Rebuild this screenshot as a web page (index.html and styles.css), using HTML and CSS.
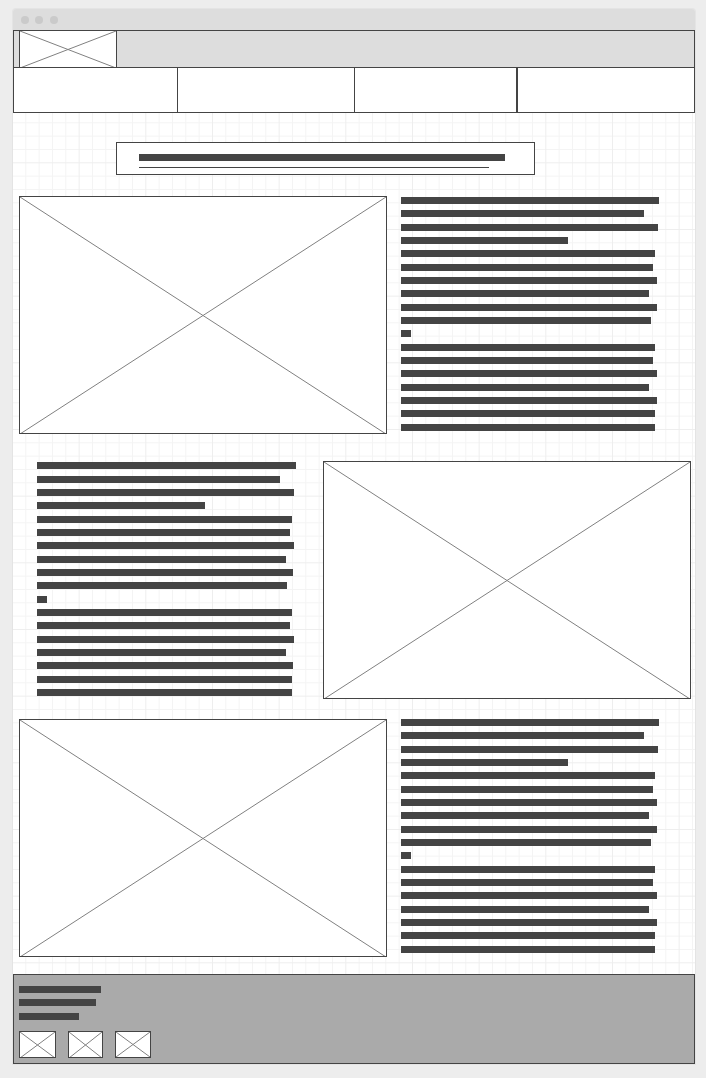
FILE: index.html
```html
<!DOCTYPE html>
<html lang="en">
<head>
<meta charset="utf-8">
<meta name="viewport" content="width=device-width, initial-scale=1">
<title>Wireframe</title>
<link rel="stylesheet" href="styles.css">
</head>
<body>
<div class="window">
  <div class="titlebar"><span class="dot"></span><span class="dot"></span><span class="dot"></span></div>
  <header class="header">
    <svg class="picture logo" viewBox="0 0 96 36" preserveAspectRatio="none" aria-hidden="true"><path d="M0 0L96 37M96 0L0 37"/></svg>
  </header>
  <nav class="nav"><div class="cell"></div><div class="cell"></div><div class="cell"></div><div class="cell"></div></nav>
  <main class="canvas">
    <div class="headline">
      <div class="headline-box">
        <div class="bar"></div>
        <div class="rule"></div>
      </div>
    </div>
    <section class="row">
      <svg class="picture photo" viewBox="0 0 366 236" preserveAspectRatio="none" aria-hidden="true"><path d="M0 0L366 237M366 0L0 237"/></svg>
      <div class="lines">
        <div class="bar" style="width:100%"></div>
        <div class="bar" style="width:94.2%"></div>
        <div class="bar" style="width:99.6%"></div>
        <div class="bar" style="width:64.7%"></div>
        <div class="bar" style="width:98.4%"></div>
        <div class="bar" style="width:97.7%"></div>
        <div class="bar" style="width:99.2%"></div>
        <div class="bar" style="width:96.1%"></div>
        <div class="bar" style="width:99.2%"></div>
        <div class="bar" style="width:96.9%"></div>
        <div class="bar" style="width:3.9%"></div>
        <div class="bar" style="width:98.4%"></div>
        <div class="bar" style="width:97.7%"></div>
        <div class="bar" style="width:99.2%"></div>
        <div class="bar" style="width:96.1%"></div>
        <div class="bar" style="width:99.2%"></div>
        <div class="bar" style="width:98.4%"></div>
        <div class="bar" style="width:98.4%"></div>
      </div>
    </section>
    <section class="row row-flipped">
      <div class="lines">
        <div class="bar" style="width:100%"></div>
        <div class="bar" style="width:93.8%"></div>
        <div class="bar" style="width:99.2%"></div>
        <div class="bar" style="width:64.9%"></div>
        <div class="bar" style="width:98.5%"></div>
        <div class="bar" style="width:97.7%"></div>
        <div class="bar" style="width:99.2%"></div>
        <div class="bar" style="width:96.1%"></div>
        <div class="bar" style="width:98.8%"></div>
        <div class="bar" style="width:96.5%"></div>
        <div class="bar" style="width:3.9%"></div>
        <div class="bar" style="width:98.5%"></div>
        <div class="bar" style="width:97.7%"></div>
        <div class="bar" style="width:99.2%"></div>
        <div class="bar" style="width:96.1%"></div>
        <div class="bar" style="width:98.8%"></div>
        <div class="bar" style="width:98.5%"></div>
        <div class="bar" style="width:98.5%"></div>
      </div>
      <svg class="picture photo" viewBox="0 0 366 236" preserveAspectRatio="none" aria-hidden="true"><path d="M0 0L366 237M366 0L0 237"/></svg>
    </section>
    <section class="row row-last">
      <svg class="picture photo" viewBox="0 0 366 236" preserveAspectRatio="none" aria-hidden="true"><path d="M0 0L366 237M366 0L0 237"/></svg>
      <div class="lines">
        <div class="bar" style="width:100%"></div>
        <div class="bar" style="width:94.2%"></div>
        <div class="bar" style="width:99.6%"></div>
        <div class="bar" style="width:64.7%"></div>
        <div class="bar" style="width:98.4%"></div>
        <div class="bar" style="width:97.7%"></div>
        <div class="bar" style="width:99.2%"></div>
        <div class="bar" style="width:96.1%"></div>
        <div class="bar" style="width:99.2%"></div>
        <div class="bar" style="width:96.9%"></div>
        <div class="bar" style="width:3.9%"></div>
        <div class="bar" style="width:98.4%"></div>
        <div class="bar" style="width:97.7%"></div>
        <div class="bar" style="width:99.2%"></div>
        <div class="bar" style="width:96.1%"></div>
        <div class="bar" style="width:99.2%"></div>
        <div class="bar" style="width:98.4%"></div>
        <div class="bar" style="width:98.4%"></div>
      </div>
    </section>
  </main>
  <footer class="footer">
    <div class="contact">
      <div class="bar" style="width:82px"></div>
      <div class="bar" style="width:77px"></div>
      <div class="bar" style="width:60px"></div>
    </div>
    <div class="social">
      <svg class="picture icon" viewBox="0 0 35 25" preserveAspectRatio="none" aria-hidden="true"><path d="M0 0L35 26M35 0L0 26"/></svg>
      <svg class="picture icon" viewBox="0 0 35 25" preserveAspectRatio="none" aria-hidden="true"><path d="M0 0L35 26M35 0L0 26"/></svg>
      <svg class="picture icon" viewBox="0 0 35 25" preserveAspectRatio="none" aria-hidden="true"><path d="M0 0L35 25M35 0L0 25"/></svg>
    </div>
  </footer>
</div>
</body>
</html>
```
FILE: styles.css
```css
* { box-sizing: border-box; }

body {
  margin: 0;
  padding: 9px 11px 14px 13px;
  background: #ededed;
  font-family: "Liberation Sans", sans-serif;
}

.window {
  border-radius: 3px 3px 0 0;
  box-shadow: 0 0 0 1px #e4e4e4;
}

.titlebar {
  display: flex;
  align-items: center;
  gap: 6px;
  height: 21px;
  padding-left: 8px;
  border-radius: 3px 3px 0 0;
  background: #ddd;
}

.dot {
  width: 8px;
  height: 8px;
  border-radius: 50%;
  background: #cacaca;
}

.dot:last-child { margin-left: 1px; }

.header {
  display: flex;
  padding-left: 5px;
  border: solid #444;
  border-width: 0 1px;
  background: #ddd;
  box-shadow: inset 0 1px #444;
}

.picture {
  display: block;
  border: 1px solid #444;
  background: #fff;
}

.picture path {
  fill: none;
  stroke: #808080;
  stroke-width: 1px;
  vector-effect: non-scaling-stroke;
}

.logo {
  width: 98px;
  height: 37px;
  border-bottom: 0;
}

.nav {
  display: grid;
  grid-template-columns: 164fr 177fr 163fr 176fr;
  height: 46px;
  border: 1px solid #444;
  background: #fff;
}

.cell { border-right: 1px solid #444; }
.cell:nth-child(3) { border-right-width: 2px; }
.cell:last-child { border-right: 0; }

.canvas {
  padding: 29px 0 17px;
  background: #fff url("data:image/svg+xml,%3Csvg xmlns='http://www.w3.org/2000/svg' width='200' height='200' viewBox='0 0 600 600'%3E%3Cg fill='none' stroke-width='3'%3E%3Cpath stroke='%23f4f4f4' d='M41.5 0v600M81.5 0v600M121.5 0v600M161.5 0v600M241.5 0v600M281.5 0v600M321.5 0v600M361.5 0v600M441.5 0v600M481.5 0v600M521.5 0v600M561.5 0v600M0 41.5h600M0 81.5h600M0 121.5h600M0 161.5h600M0 241.5h600M0 281.5h600M0 321.5h600M0 361.5h600M0 441.5h600M0 481.5h600M0 521.5h600M0 561.5h600'/%3E%3Cpath stroke='%23eeeeee' d='M1.5 0v600M201.5 0v600M401.5 0v600M0 1.5h600M0 201.5h600M0 401.5h600'/%3E%3C/g%3E%3C/svg%3E") -1px -84px;
}

.headline {
  display: grid;
  grid-template-columns: 419fr;
  padding: 0 160px 0 103px;
}

.headline-box {
  padding: 11px 29px 6px 22px;
  border: 1px solid #444;
  background: #fff;
}

.bar {
  height: 7px;
  background: #444;
}

.rule {
  height: 1px;
  margin: 6px 16px 0 0;
  background: #444;
}

.row {
  display: grid;
  grid-template-columns: 368fr 258fr;
  gap: 14px;
  margin-top: 21px;
  padding: 0 36px 0 6px;
}

.row-flipped {
  grid-template-columns: 259fr 368fr;
  gap: 27px;
  margin-top: 27px;
  padding: 0 4px 0 24px;
}

.row-last { margin-top: 20px; }

.photo {
  width: 100%;
  aspect-ratio: 368 / 238;
}

.lines {
  display: flex;
  flex-direction: column;
  gap: 6px;
  padding-top: 1px;
}

.row-last .lines { padding-top: 0; }

.lines .bar:nth-child(3n) { margin-top: 1px; }
.row-flipped .lines .bar:nth-child(3n) { margin-top: 0; }
.row-flipped .lines .bar:nth-child(3n + 2) { margin-top: 1px; }

.footer {
  padding: 11px 5px 5px;
  border: 1px solid #444;
  background: #aaa;
}

.contact {
  display: flex;
  flex-direction: column;
  gap: 6px;
}

.contact .bar:last-child { margin-top: 1px; }

.social {
  display: flex;
  gap: 12px;
  margin-top: 11px;
}

.icon {
  width: 36px;
  height: 27px;
}

.icon:first-child { width: 37px; }
.icon:nth-child(2) { width: 35px; }
```
